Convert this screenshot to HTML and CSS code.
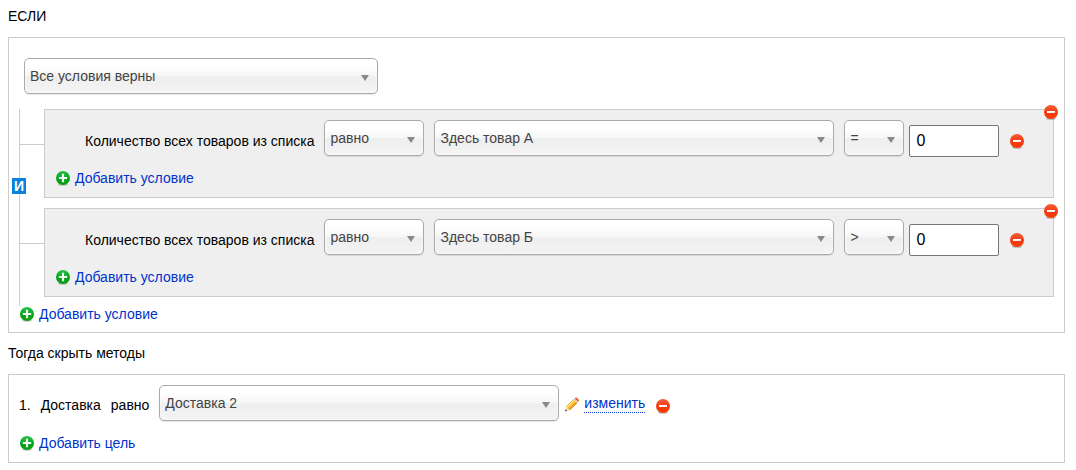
FILE: index.html
```
<!DOCTYPE html>
<html lang="ru">
<head>
<meta charset="utf-8">
<title>Условия</title>
<link rel="stylesheet" href="styles.css">
</head>
<body>
<svg class="sprite" aria-hidden="true">
  <defs>
    <linearGradient id="green" x1="0" y1="0" x2="0" y2="1"><stop offset="0" stop-color="#2cc04a"/><stop offset=".55" stop-color="#00a51d"/><stop offset="1" stop-color="#0a9c0c"/></linearGradient>
    <linearGradient id="red" x1="0" y1="0" x2="0" y2="1"><stop offset="0" stop-color="#f4603c"/><stop offset=".5" stop-color="#f23a10"/><stop offset="1" stop-color="#fb3c00"/></linearGradient>
    <symbol id="add" viewBox="0 0 14 15">
      <ellipse cx="7" cy="13.2" rx="5" ry="1.6" fill="#000" opacity=".2"/>
      <circle cx="7" cy="7" r="7" fill="url(#green)"/>
      <path d="M5.9 2.8h2.2v3.1h3.1v2.2H8.1v3.1H5.9V8.1H2.8V5.9h3.1z" fill="#f4fbf4"/>
    </symbol>
    <symbol id="remove" viewBox="0 0 14 15">
      <ellipse cx="7" cy="13.2" rx="5" ry="1.6" fill="#000" opacity=".25"/>
      <circle cx="7" cy="7" r="7" fill="url(#red)"/>
      <path d="M3 6h8v2H3z" fill="#fff"/>
      <path d="M3 8l8-1v1z" fill="#e3ddda"/>
    </symbol>
    <symbol id="pencil" viewBox="0 0 14 15">
      <path d="M0 14.4l1.2-4.6 3.5 3.3z" fill="#f3d9b0"/>
      <path d="M0 14.4l.6-2 1.5 1.4z" fill="#333"/>
      <path d="M1.2 9.8l7.4-7.3 3.5 3.4-7.4 7.2z" fill="#ffbe2b"/>
      <path d="M1.2 9.8l7.4-7.3 1.1 1-7.4 7.4z" fill="#ffe48a"/>
      <path d="M3.7 12.1l7.4-7.2 1 1-7.4 7.2z" fill="#ed9a1c"/>
      <path d="M8.6 2.5l1-1 3.5 3.4-1 1z" fill="#d5d5da"/>
      <path d="M9.6 1.5l.7-.7q.8-.7 1.6 0l1.8 1.8q.6.8 0 1.6l-.6.7z" fill="#e8663a"/>
      <path d="M1.2 9.8l7.4-7.3M4.7 13.1l7.4-7.2" fill="none" stroke="#c27a14" stroke-width=".5"/>
    </symbol>
  </defs>
</svg>

<h2 class="title">ЕСЛИ</h2>
<section class="panel">
  <div class="mode">
    <span class="select select-mode"><select aria-label="Режим условий"><option>Все условия верны</option></select></span>
  </div>
  <div class="tree">
    <span class="joint">И</span>
    <div class="branch">
      <div class="connector"></div>
      <div class="group">
        <button class="icon-button corner" type="button" aria-label="Удалить группу"><svg class="icon"><use href="#remove"/></svg></button>
        <div class="row condition">
          <label class="caption" for="cmp1">Количество всех товаров из списка</label>
          <span class="select select-compare"><select id="cmp1"><option>равно</option></select></span>
          <span class="select select-item"><select aria-label="Товар"><option>Здесь товар А</option></select></span>
          <span class="select select-sign"><select aria-label="Знак"><option>=</option></select></span>
          <input class="amount" type="text" value="0" aria-label="Количество">
          <button class="icon-button" type="button" aria-label="Удалить условие"><svg class="icon"><use href="#remove"/></svg></button>
        </div>
        <a class="add" href="#"><svg class="icon"><use href="#add"/></svg>Добавить условие</a>
      </div>
    </div>
    <div class="branch">
      <div class="connector"></div>
      <div class="group">
        <button class="icon-button corner" type="button" aria-label="Удалить группу"><svg class="icon"><use href="#remove"/></svg></button>
        <div class="row condition">
          <label class="caption" for="cmp2">Количество всех товаров из списка</label>
          <span class="select select-compare"><select id="cmp2"><option>равно</option></select></span>
          <span class="select select-item"><select aria-label="Товар"><option>Здесь товар Б</option></select></span>
          <span class="select select-sign"><select aria-label="Знак"><option>&gt;</option></select></span>
          <input class="amount" type="text" value="0" aria-label="Количество">
          <button class="icon-button" type="button" aria-label="Удалить условие"><svg class="icon"><use href="#remove"/></svg></button>
        </div>
        <a class="add" href="#"><svg class="icon"><use href="#add"/></svg>Добавить условие</a>
      </div>
    </div>
  </div>
  <a class="add add-root" href="#"><svg class="icon"><use href="#add"/></svg>Добавить условие</a>
</section>

<h2 class="title">Тогда скрыть методы</h2>
<section class="panel panel-target">
  <div class="row target">
    <label class="words" for="target"><span>1.</span><span>Доставка</span><span>равно</span></label>
    <span class="select select-item"><select id="target"><option>Доставка 2</option></select></span>
    <a class="edit" href="#"><svg class="icon"><use href="#pencil"/></svg><span class="edit-text">изменить</span></a>
    <button class="icon-button" type="button" aria-label="Удалить цель"><svg class="icon"><use href="#remove"/></svg></button>
  </div>
  <a class="add" href="#"><svg class="icon"><use href="#add"/></svg>Добавить цель</a>
</section>
</body>
</html>
```

FILE: styles.css
```
* { box-sizing: border-box; }

body {
  margin: 0;
  padding: 8px 11px 7px 8px;
  background: #fff;
  color: #000;
  font: 14px/16px "Liberation Sans", Arial, sans-serif;
}

.sprite { position: absolute; width: 0; height: 0; }

.title { margin: 0 0 13px; font-size: 14px; font-weight: 400; }
.panel + .title { margin-top: 12px; }

.panel { border: 1px solid #ccc; padding: 20px 10px 10px; }
.panel-target { padding-top: 10px; padding-bottom: 11px; }

.mode { display: flex; padding: 0 5px 15px; }

.tree {
  position: relative;
  display: flex;
  flex-direction: column;
  gap: 10px;
  border-left: 1px solid #ccc;
  padding-bottom: 9px;
}
.branch { display: flex; }
.connector { flex: none; width: 24px; height: 36px; border-bottom: 1px solid #ccc; }
.joint {
  position: absolute;
  left: -8px;
  top: 69px;
  width: 14px;
  background: #0a80d8;
  color: #fff;
  font-weight: 700;
  text-align: center;
}

.group {
  position: relative;
  flex: 1;
  border: 1px solid #ccc;
  background: #efefef;
  padding: 10px 29px 11px 11px;
}
.corner { position: absolute; right: -5px; top: -5px; }

.row { display: flex; align-items: center; height: 42px; margin-bottom: 8px; }
.condition { padding-left: 29px; }
.caption { margin-right: 10px; white-space: nowrap; }

.select { position: relative; align-self: flex-start; height: 36px; }
.select select {
  appearance: none;
  display: block;
  width: 100%;
  height: 36px;
  border: 1px solid #aaa;
  border-radius: 5px;
  padding: 0 24px 0 5px;
  background: linear-gradient(#fff 20%, #f6f6f6 50%, #eee 52%, #f4f4f4 100%);
  box-shadow: 0 0 3px #fff inset, 0 1px 1px rgba(0, 0, 0, .1);
  color: #444;
  font: 14px "Liberation Sans", Arial, sans-serif;
}
.select::after {
  content: "";
  position: absolute;
  right: 9px;
  top: 17px;
  border: solid transparent;
  border-width: 6px 4px 0;
  border-top-color: #888;
  pointer-events: none;
}
.select-mode { width: 354px; }
.select-compare { width: 100px; margin-right: 10px; }
.select-item { width: 400px; }
.condition .select-item { margin-right: 10px; }
.select-sign { width: 60px; margin-right: 5px; }

.amount {
  width: 90px;
  height: 32px;
  margin-right: 11px;
  border: 1px solid #767676;
  border-radius: 2px;
  padding: 0 6px;
  background: #fff;
  color: #000;
  font: 16px "Liberation Sans", Arial, sans-serif;
}

.icon { display: block; flex: none; width: 14px; height: 15px; }
.icon-button { flex: none; border: 0; padding: 0; background: none; cursor: pointer; }

.add {
  display: flex;
  align-items: center;
  gap: 5px;
  width: fit-content;
  height: 16px;
  color: #0033cc;
  text-decoration: none;
}

.words { display: flex; gap: 10px; margin-right: 10px; padding-bottom: 2px; }
.edit {
  display: flex;
  align-items: center;
  gap: 5px;
  height: 38px;
  align-self: flex-start;
  margin: 0 11px 0 6px;
  color: #0033cc;
  text-decoration: none;
}
.edit-text { height: 18px; line-height: 16px; border-bottom: 1px dotted #0033cc; }
.panel-target .add, .add-root { margin-left: 1px; }
```
